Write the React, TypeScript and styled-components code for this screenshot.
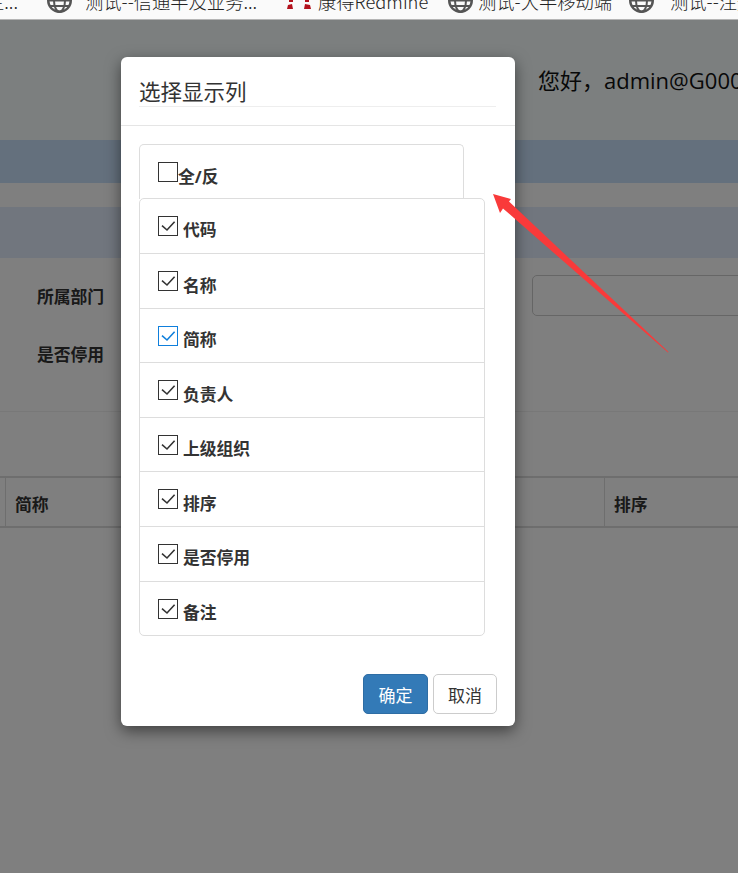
import React from 'react';
import styled, { createGlobalStyle } from 'styled-components';

const COLUMNS = ['代码', '名称', '简称', '负责人', '上级组织', '排序', '是否停用', '备注'];

const BOOKMARKS = [
    { id: 'b1', text: '测试--信通半及业务...', width: 239, gap: 13, icon: 'globe' },
    { id: 'b2', text: '康得Redmine', width: 162, gap: 7, icon: 'redmine' },
    { id: 'b3', text: '测试-大半移动端', width: 181, gap: 5, icon: 'globe' },
    { id: 'b4', text: '测试--注册', width: 109, gap: 16, icon: 'globe' },
];

const GlobeIcon = () => (
    <svg width="25" height="25" viewBox="0 0 25 25" fill="none" stroke="#555" strokeWidth="2">
        <circle cx="12.5" cy="12.5" r="11.3" strokeWidth="2.4" />
        <ellipse cx="12.5" cy="12.5" rx="5.5" ry="11.3" />
        <path d="M1.5 12.5h22M3 18h19" />
    </svg>
);

const RedmineIcon = () => (
    <svg width="25" height="25" viewBox="0 0 25 25" fill="#b3121d">
        <path d="M2 17l4-1 1 5H1zM24 17l-5-1-1 5h7z" />
        <path d="M3 10h4v4H3zM19 10h4v4h-4z" />
    </svg>
);

const Check = ({ color }: { color: string }) => (
    <svg width="18" height="18" viewBox="0 0 18 18" fill="none" stroke={color} strokeWidth="1.6">
        <path d="M3 8.7l5 4.3 7.6-8.2" />
    </svg>
);

const App: React.FC = () => {
    return (
        <Root>
            <GlobalStyle />
            <BookmarkBar>
                <FirstBookmark>主...</FirstBookmark>
                {BOOKMARKS.map((b) => (
                    <Bookmark key={b.id} $width={b.width} $gap={b.gap}>
                        {b.icon === 'globe' ? <GlobeIcon /> : <RedmineIcon />}
                        <span>{b.text}</span>
                    </Bookmark>
                ))}
            </BookmarkBar>

            <Page>
                <TopHeader>您好，admin@G000</TopHeader>
                <NavBand />
                <TitleBand />
                <FilterArea>
                    <FilterRow>
                        <FilterLabel>所属部门</FilterLabel>
                        <FilterInput />
                    </FilterRow>
                    <FilterRow>
                        <FilterLabel>是否停用</FilterLabel>
                    </FilterRow>
                </FilterArea>
                <TableHead>
                    <HeadCell />
                    <HeadCell>简称</HeadCell>
                    <HeadCell>排序</HeadCell>
                </TableHead>
                <Backdrop />
            </Page>

            <Modal>
                <ModalHeader>
                    <ModalTitle>选择显示列</ModalTitle>
                </ModalHeader>
                <ModalBody>
                    <AllBox>
                        <CheckBox />
                        <AllLabel>全/反</AllLabel>
                    </AllBox>
                    <ColumnList>
                        {COLUMNS.map((name) => {
                            const focused = name === '简称';
                            return (
                                <ColumnRow key={name}>
                                    <CheckBox $focused={focused}>
                                        <Check color={focused ? '#0f7fdc' : '#333'} />
                                    </CheckBox>
                                    <ColumnLabel>{name}</ColumnLabel>
                                </ColumnRow>
                            );
                        })}
                    </ColumnList>
                </ModalBody>
                <ModalFooter>
                    <PrimaryButton>确定</PrimaryButton>
                    <DefaultButton>取消</DefaultButton>
                </ModalFooter>
            </Modal>

            <Arrow width="176" height="160" viewBox="0 0 176 160">
                <polygon points="0,0 18,5 16,7.5 175.5,158 175,158.6 10,14.5 7,19" fill="#f93a3a" />
            </Arrow>
        </Root>
    );
};

export default App;

const GlobalStyle = createGlobalStyle`
    html, body {
        margin: 0;
        padding: 0;
        background: #fff;
        overflow: hidden;
    }
    body {
        font-family: 'Open Sans', 'Noto Sans CJK SC', sans-serif;
        color: #333;
    }
`;

const Root = styled.div`
    position: relative;
    width: 738px;
    height: 873px;
    overflow: hidden;
`;

const BookmarkBar = styled.div`
    display: flex;
    height: 19px;
    background: #fafafa;
    border-bottom: 1px solid #b5b5b5;
    overflow: hidden;
    font-family: 'Noto Sans CJK SC', sans-serif;
    font-size: 18.3px;
    font-weight: 300;
    color: #222;
`;

const FirstBookmark = styled.div`
    flex: none;
    width: 47px;
    margin-top: -11px;
    margin-left: -14px;
    padding-right: 14px;
    line-height: 24px;
    white-space: nowrap;
`;

const Bookmark = styled.div<{ $width: number; $gap: number }>`
    display: flex;
    flex: none;
    align-items: flex-start;
    width: ${(p) => p.$width}px;
    gap: ${(p) => p.$gap}px;
    margin-top: -12px;
    white-space: nowrap;
    line-height: 24px;

    svg {
        flex: none;
    }

    span {
        margin-top: 1px;
    }
`;

const Page = styled.div`
    position: relative;
    height: 853px;
`;

const Backdrop = styled.div`
    position: absolute;
    inset: 0;
    background: rgba(0, 0, 0, 0.5);
`;

const TopHeader = styled.div`
    height: 120px;
    box-sizing: border-box;
    padding: 44px 0 0 538px;
    background: #f8feff;
    font-size: 22px;
    line-height: 32px;
    color: #111;
    white-space: nowrap;
`;

const NavBand = styled.div`
    height: 43px;
    margin-bottom: 24px;
    background: #c8e0fa;
`;

const TitleBand = styled.div`
    height: 51px;
    background: #e2ecfc;
`;

const FilterArea = styled.div`
    height: 154px;
    box-sizing: border-box;
    padding-top: 17px;
    border-bottom: 1px solid #f0f0f0;
`;

const FilterRow = styled.div`
    display: flex;
    align-items: center;
    height: 41px;
    margin-bottom: 17px;
    padding-left: 37px;
`;

const FilterLabel = styled.label`
    width: 495px;
    flex: none;
    font-size: 16.8px;
    font-weight: 700;
    color: #333;
`;

const FilterInput = styled.div`
    flex: 1;
    height: 41px;
    box-sizing: border-box;
    margin-right: -10px;
    border: 1px solid #ccc;
    border-radius: 5px;
    background: #fff;
`;

const TableHead = styled.div`
    display: grid;
    grid-template-columns: 6px 599px 1fr;
    height: 52px;
    margin-top: 64px;
    box-sizing: border-box;
    border-top: 2px solid #ddd;
    border-bottom: 2px solid #ddd;
`;

const HeadCell = styled.div`
    display: flex;
    align-items: center;
    box-sizing: border-box;
    min-width: 0;
    padding: 3px 0 0 9px;
    border-right: 1px solid #ddd;
    font-size: 16.8px;
    font-weight: 700;
    color: #333;

    &:first-child {
        padding: 0;
    }

    &:last-child {
        border-right: none;
    }
`;

const Modal = styled.div`
    position: absolute;
    left: 121px;
    top: 57px;
    width: 394px;
    height: 669px;
    display: flex;
    flex-direction: column;
    background: #fff;
    border-radius: 6px;
    box-shadow: 0 5px 15px rgba(0, 0, 0, 0.5);
`;

const ModalHeader = styled.div`
    padding: 18px 19px 18px 18px;
    border-bottom: 1px solid #e5e5e5;
`;

const ModalTitle = styled.div`
    height: 31px;
    border-bottom: 1px solid #eee;
    font-size: 21.5px;
    line-height: 33px;
    color: #333;
    white-space: nowrap;
`;

const ModalBody = styled.div`
    padding: 18px 18px 0;
`;

const AllBox = styled.div`
    display: flex;
    width: 325px;
    height: 55px;
    box-sizing: border-box;
    padding: 17px 18px 0;
    border: 1px solid #ddd;
    border-bottom: none;
    border-radius: 5px 5px 0 0;
`;

const CheckBox = styled.span<{ $focused?: boolean }>`
    display: flex;
    flex: none;
    align-items: center;
    justify-content: center;
    width: 20px;
    height: 20px;
    box-sizing: border-box;
    border: 1.3px solid ${(p) => (p.$focused ? '#0f7fdc' : '#333')};
    background: #fff;
`;

const AllLabel = styled.span`
    margin-top: 2.5px;
    font-size: 16.8px;
    font-weight: 700;
    line-height: 24px;
    color: #333;
`;

const ColumnList = styled.div`
    position: relative;
    display: grid;
    grid-auto-rows: 1fr;
    width: 346px;
    height: 438.4px;
    margin-top: -1.3px;
    box-sizing: border-box;
    border: 1px solid #ddd;
    border-radius: 5px;
    background: #fff;
`;

const ColumnRow = styled.div`
    display: flex;
    box-sizing: border-box;
    padding: 17px 18px 0;

    & + & {
        border-top: 1px solid #ddd;
    }
`;

const ColumnLabel = styled.span`
    margin: 2.4px 0 0 5px;
    font-size: 16.8px;
    font-weight: 700;
    line-height: 24px;
    color: #333;
`;

const ModalFooter = styled.div`
    display: flex;
    justify-content: flex-end;
    gap: 5px;
    margin-top: auto;
    padding: 0 18px 12px;
`;

const PrimaryButton = styled.button`
    width: 65px;
    height: 40px;
    padding: 0;
    border: 1px solid #2e6da4;
    border-radius: 5px;
    background: #337ab7;
    color: #fff;
    font-family: 'Noto Sans CJK SC', sans-serif;
    font-size: 17px;
`;

const DefaultButton = styled(PrimaryButton)`
    width: 64px;
    border-color: #ccc;
    background: #fff;
    color: #333;
`;

const Arrow = styled.svg`
    position: absolute;
    left: 493px;
    top: 194px;
    pointer-events: none;
`;
